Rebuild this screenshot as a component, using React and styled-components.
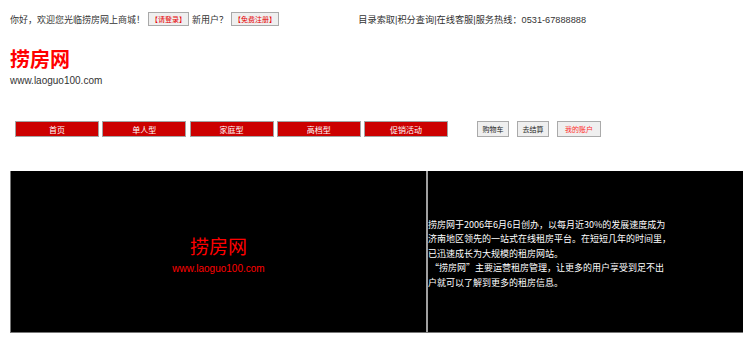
import React from "react";
import styled, { createGlobalStyle } from "styled-components";

const GlobalStyle = createGlobalStyle`
  body {
    margin: 0;
    background: #fff;
    font-family: "Liberation Sans", "Noto Sans CJK SC", sans-serif;
    color: #333;
  }
`;

const Page = styled.div`
  padding-left: 10px;
`;

const TopBar = styled.div`
  display: flex;
  justify-content: space-between;
  align-items: center;
  width: 576px;
  height: 14px;
  padding-top: 12px;
  font-size: 9px;
`;

const Greeting = styled.div`
  display: flex;
  align-items: center;
  gap: 3px;
`;

const LinkBtn = styled.button`
  height: 14px;
  padding: 0 2px;
  font-family: "Noto Sans CJK SC", sans-serif;
  font-size: 7px;
  line-height: 12px;
  color: #e60000;
  background: #efefef;
  border: 1px solid #a9a9a9;
`;

const Service = styled.div`
  white-space: nowrap;
  font-size: 9.2px;
`;

const Logo = styled.div`
  margin-top: 22px;
  font-size: 20px;
  line-height: 24px;
  font-weight: bold;
  color: #ff0000;
`;

const Site = styled.div`
  font-size: 10px;
  line-height: 14px;
  margin-top: 2px;
`;

const Nav = styled.div`
  display: flex;
  align-items: center;
  margin-top: 33px;
  padding-left: 5px;
  height: 16px;
`;

const Menu = styled.div`
  display: flex;
  gap: 3.25px;
`;

const MenuBtn = styled.button`
  width: 84px;
  height: 16px;
  padding: 0;
  font-family: "Noto Sans CJK SC", sans-serif;
  font-size: 8px;
  color: #fff;
  background: #cc0000;
  border: 1px solid #a4a4a4;
`;

const Tools = styled.div`
  display: flex;
  gap: 8px;
  margin-left: 29px;
`;

const ToolBtn = styled.button`
  width: ${p => p.w}px;
  height: 16px;
  padding: 0;
  font-family: "Noto Sans CJK SC", sans-serif;
  font-size: 7px;
  color: ${p => (p.red ? "#ff2a2a" : "#222")};
  background: #efefef;
  border: 1px solid #aaa;
`;

const Banner = styled.div`
  display: flex;
  margin-top: 34px;
  width: 733px;
  height: 162px;
  background: #000;
  border-left: 1px solid #777;
  border-bottom: 1px solid #777;
  box-sizing: border-box;
`;

const BrandPanel = styled.div`
  width: 415px;
  display: flex;
  flex-direction: column;
  align-items: center;
  justify-content: center;
  color: #ff0000;
  border-right: 2px solid #a0a0a0;
  padding-top: 7px;
`;

const BrandName = styled.div`
  font-size: 19px;
  line-height: 24px;
`;

const BrandSite = styled.div`
  font-size: 10px;
  line-height: 12px;
  margin-top: 3px;
`;

const About = styled.div`
  flex: 1;
  display: flex;
  align-items: center;
  padding-top: 5px;
  font-family: "Noto Sans CJK SC", sans-serif;
  font-size: 9px;
  line-height: 14.5px;
  color: #fff;
`;

const AboutText = styled.p`
  margin: 0;
`;

const menus = ["首页", "单人型", "家庭型", "高档型", "促销活动"];

export default function App() {
  return (
    <Page>
      <GlobalStyle />
      <TopBar>
        <Greeting>
          你好，欢迎您光临捞房网上商城！
          <LinkBtn>【请登录】</LinkBtn>
          新用户？
          <LinkBtn>【免费注册】</LinkBtn>
        </Greeting>
        <Service>目录索取|积分查询|在线客服|服务热线：0531-67888888</Service>
      </TopBar>
      <Logo>捞房网</Logo>
      <Site>www.laoguo100.com</Site>
      <Nav>
        <Menu>
          {menus.map(m => (
            <MenuBtn key={m}>{m}</MenuBtn>
          ))}
        </Menu>
        <Tools>
          <ToolBtn w={32}>购物车</ToolBtn>
          <ToolBtn w={32}>去结算</ToolBtn>
          <ToolBtn w={44} red>我的账户</ToolBtn>
        </Tools>
      </Nav>
      <Banner>
        <BrandPanel>
          <BrandName>捞房网</BrandName>
          <BrandSite>www.laoguo100.com</BrandSite>
        </BrandPanel>
        <About>
          <AboutText>
            捞房网于2006年6月6日创办，以每月近30%的发展速度成为<br />
            济南地区领先的一站式在线租房平台。在短短几年的时间里，<br />
            已迅速成长为大规模的租房网站。<br />
            &nbsp;“捞房网”主要运营租房管理，让更多的用户享受到足不出<br />
            户就可以了解到更多的租房信息。
          </AboutText>
        </About>
      </Banner>
    </Page>
  );
}
